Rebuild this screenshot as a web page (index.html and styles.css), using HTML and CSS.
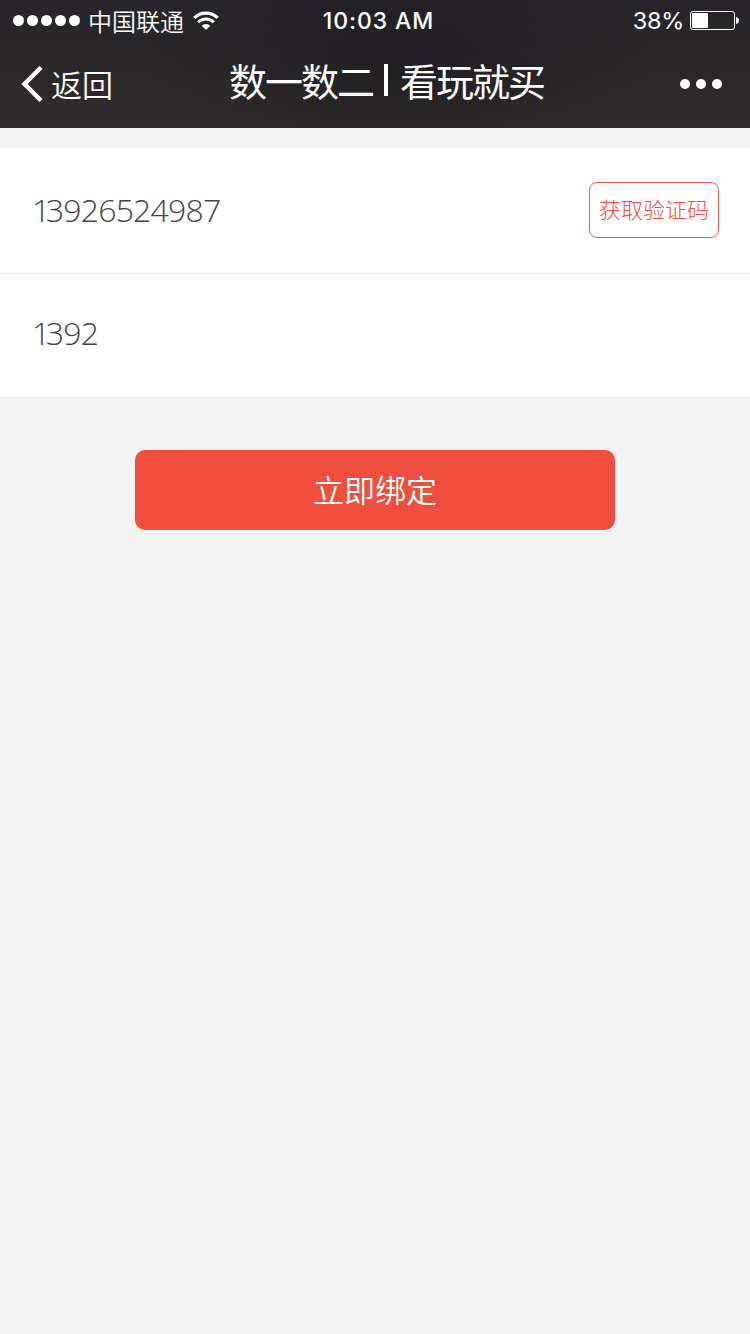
FILE: index.html
```html
<!DOCTYPE html>
<html lang="zh-CN">
<head>
<meta charset="utf-8">
<title>数一数二 | 看玩就买</title>
<link rel="stylesheet" href="styles.css">
</head>
<body>
<header class="header">
  <div class="status">
    <div class="status-left">
      <span class="signal"><i></i><i></i><i></i><i></i><i></i></span>
      <span class="carrier">中国联通</span>
      <svg class="wifi" width="26" height="20" viewBox="0 0 26 20" fill="none" stroke="#fff">
        <path d="M1.3 6.9A16.6 16.6 0 0 1 24.7 6.9" stroke-width="3.1"/>
        <path d="M5.2 11.2A11 11 0 0 1 20.8 11.2" stroke-width="2.9"/>
        <path d="M13 19L8.7 14.7A6 6 0 0 1 17.3 14.7Z" fill="#fff" stroke="none"/>
      </svg>
    </div>
    <span class="time">10:03 AM</span>
    <div class="status-right">
      <span class="percent">38%</span>
      <svg class="battery" width="50" height="20" viewBox="0 0 50 20">
        <rect x=".5" y=".5" width="44" height="18" rx="2.5" fill="none" stroke="#fff"/>
        <rect x="2" y="2" width="16" height="15" rx="1" fill="#fff"/>
        <path d="M46 6Q49 6.5 49 9.5T46 13Z" fill="#fff"/>
      </svg>
    </div>
  </div>
  <nav class="nav">
    <a class="back">
      <svg class="chevron" width="22" height="36" viewBox="0 0 22 36" fill="none" stroke="#fff" stroke-width="4.4">
        <path d="M20 1.5L3.5 18L20 34.5"/>
      </svg>
      <span class="back-label">返回</span>
    </a>
    <h1 class="title"><span>数一数二</span><i class="divider"></i><span>看玩就买</span></h1>
    <div class="more"><i></i><i></i><i></i></div>
  </nav>
</header>
<main>
  <form class="form">
    <div class="field phone">
      <span class="value">13926524987</span>
      <button class="code-button" type="button">获取验证码</button>
    </div>
    <div class="field code"><span class="value">1392</span></div>
  </form>
  <button class="submit" type="button">立即绑定</button>
</main>
</body>
</html>
```
FILE: styles.css
```css
* { box-sizing: border-box; }
body {
  margin: 0;
  min-height: 1334px;
  background: #f3f3f3;
  font-family: "Noto Sans CJK SC", sans-serif;
}
button { padding: 0; font-family: inherit; }
.header {
  height: 128px;
  color: #fff;
  background:
    radial-gradient(ellipse 260px 110px at 400px 60px, rgba(31, 29, 33, .8), rgba(31, 29, 33, 0)),
    linear-gradient(#272529, #2b282a 50%, #312c2d);
}
.status {
  display: grid;
  grid-template-columns: 1fr auto 1fr;
  align-items: center;
  height: 40px;
  padding: 0 10px 0 13px;
}
.status-left, .status-right { display: flex; align-items: center; height: 40px; }
.status-right { justify-content: flex-end; }
.signal { display: flex; gap: 3px; }
.signal i { width: 11px; height: 11px; border-radius: 50%; background: #fff; }
.carrier { margin-left: 8px; font-size: 24px; font-weight: 350; line-height: 40px; }
.wifi { margin-left: 9px; }
.time { padding: 1px 0 0 4px; font: 500 23px/40px Inter, sans-serif; letter-spacing: .9px; }
.percent { padding-top: 1px; font: 400 23.5px/40px Inter, sans-serif; letter-spacing: -.3px; }
.battery { margin: 1px 0 0 6px; }
.nav {
  display: grid;
  grid-template-columns: 1fr auto 1fr;
  align-items: center;
  height: 88px;
  padding: 0 28px 0 21px;
}
.back { display: flex; align-items: center; }
.back-label { margin-left: 8px; font-size: 31px; font-weight: 350; line-height: 40px; }
.title {
  display: flex;
  align-items: center;
  margin: 0;
  padding: 0 0 8px 30px;
  font-size: 38px;
  font-weight: 400;
  letter-spacing: -2px;
  line-height: 50px;
}
.divider { width: 4px; height: 32px; margin: 0 12px 0 11px; background: #fff; }
.more { display: flex; justify-content: flex-end; gap: 6px; }
.more i { width: 10px; height: 10px; border-radius: 50%; background: #fff; }
.form { margin-top: 20px; background: #fff; }
.field {
  display: flex;
  align-items: center;
  justify-content: space-between;
  padding: 0 31px 0 32px;
  border-bottom: 1px solid #e8e8e8;
}
.phone { height: 126px; padding-bottom: 2px; }
.code { height: 124px; padding-bottom: 6px; }
.value { color: #444; font: 300 32px/44px "Open Sans", sans-serif; letter-spacing: -.8px; }
.value::first-letter { letter-spacing: -4.5px; }
.code-button {
  width: 130px;
  height: 56px;
  padding-bottom: 4px;
  border: 1px solid #f05a4c;
  border-radius: 8px;
  background: #fff;
  color: #f04f40;
  font-size: 22px;
  font-weight: 300;
}
.submit {
  display: block;
  width: 480px;
  height: 80px;
  margin: 52px auto 0;
  padding-bottom: 4px;
  border: 0;
  border-radius: 10px;
  background: #f04f40;
  color: #fff;
  font-size: 31px;
  font-weight: 350;
}
```
